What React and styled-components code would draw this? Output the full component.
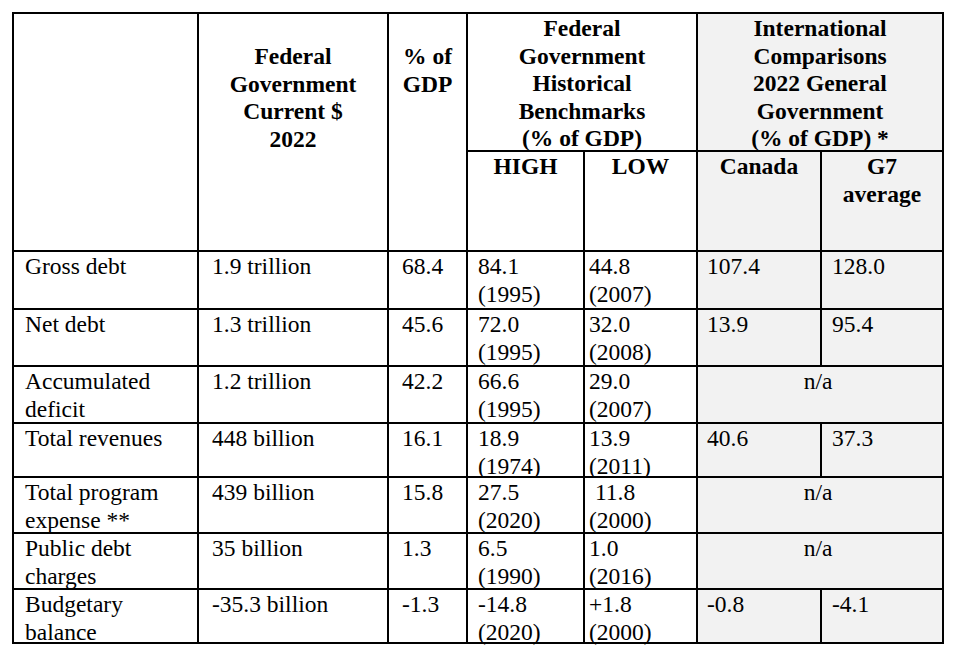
import React from "react";
import styled, { createGlobalStyle } from "styled-components";

const GlobalStyle = createGlobalStyle`
  body {
    margin: 0;
    background: #fff;
  }
`;

const Page = styled.div`
  padding: 12px;
  font-family: "Liberation Serif", "Times New Roman", serif;
  font-size: 23.5px;
  color: #000;
`;

// widths include the 2px right border of each column
const Table = styled.div`
  display: grid;
  grid-template-columns: 185px 190px 79px 117px 113px 124px 122px;
  grid-template-rows: 138px 100px 58px 57px 57px 54px 56px 56px 54px;
  width: 932px;
  box-sizing: border-box;
  border-left: 2px solid #000;
  border-top: 2px solid #000;
`;

const Cell = styled.div`
  box-sizing: border-box;
  border-right: 2px solid #000;
  border-bottom: 2px solid #000;
  background: ${(p) => (p.$shade ? "#f2f2f2" : "#fff")};
  grid-column: ${(p) => p.$col};
  grid-row: ${(p) => p.$row};
  padding: 0 4px 0 ${(p) => p.$pad || 0}px;
  font-family: "Liberation Serif", "Times New Roman", serif;
  line-height: 28px;
  white-space: pre;
  overflow: visible;
`;

const HeadCell = styled(Cell)`
  font-weight: bold;
  text-align: center;
  line-height: 27.5px;
  padding: ${(p) => p.$top || 0}px 0 0 0;
`;

const HeadText = styled.div`
  margin-top: ${(p) => p.$shift || 0}px;
`;

const CenterText = styled.div`
  text-align: center;
`;

const pads = [11, 13, 13, 10, 4, 9, 10];

const rows = [
  ["Gross debt", "1.9 trillion", "68.4", "84.1\n(1995)", "44.8\n(2007)", "107.4", "128.0"],
  ["Net debt", "1.3 trillion", "45.6", "72.0\n(1995)", "32.0\n(2008)", "13.9", "95.4"],
  ["Accumulated\ndeficit", "1.2 trillion", "42.2", "66.6\n(1995)", "29.0\n(2007)"],
  ["Total revenues", "448 billion", "16.1", "18.9\n(1974)", "13.9\n(2011)", "40.6", "37.3"],
  ["Total program\nexpense **", "439 billion", "15.8", "27.5\n(2020)", " 11.8\n(2000)"],
  ["Public debt\ncharges", "35 billion", "1.3", "6.5\n(1990)", "1.0\n(2016)"],
  ["Budgetary\nbalance", "-35.3 billion", "-1.3", "-14.8\n(2020)", "+1.8\n(2000)", "-0.8", "-4.1"],
];

function BodyRow({ cells, index }) {
  const row = index + 3;
  const out = [];
  for (let i = 0; i < 5; i++) {
    out.push(
      <Cell key={i} $col={`${i + 1}`} $row={`${row}`} $pad={pads[i]}>
        {cells[i]}
      </Cell>
    );
  }
  if (cells.length > 5) {
    out.push(
      <Cell key={5} $col="6" $row={`${row}`} $pad={pads[5]} $shade>
        {cells[5]}
      </Cell>
    );
    out.push(
      <Cell key={6} $col="7" $row={`${row}`} $pad={pads[6]} $shade>
        {cells[6]}
      </Cell>
    );
  } else {
    out.push(
      <Cell key={5} $col="6 / span 2" $row={`${row}`} $shade>
        <CenterText>n/a</CenterText>
      </Cell>
    );
  }
  return out;
}

export default function App() {
  return (
    <Page>
      <GlobalStyle />
      <Table>
        <HeadCell $col="1" $row="1 / span 2" />
        <HeadCell $col="2" $row="1 / span 2" $top={29}>
          Federal
          <br />
          Government
          <br />
          Current $
          <br />
          2022
        </HeadCell>
        <HeadCell $col="3" $row="1 / span 2" $top={29}>
          % of
          <br />
          GDP
        </HeadCell>
        <HeadCell $col="4 / span 2" $row="1">
          <HeadText $shift={1}>
            Federal
            <br />
            Government
            <br />
            Historical
            <br />
            Benchmarks
            <br />
            (% of GDP)
          </HeadText>
        </HeadCell>
        <HeadCell $col="6 / span 2" $row="1" $shade>
          <HeadText $shift={1}>
            International
            <br />
            Comparisons
            <br />
            2022 General
            <br />
            Government
            <br />
            (% of GDP) *
          </HeadText>
        </HeadCell>
        <HeadCell $col="4" $row="2">
          <HeadText $shift={1}>HIGH</HeadText>
        </HeadCell>
        <HeadCell $col="5" $row="2">
          <HeadText $shift={1}>LOW</HeadText>
        </HeadCell>
        <HeadCell $col="6" $row="2" $shade>
          <HeadText $shift={1}>Canada</HeadText>
        </HeadCell>
        <HeadCell $col="7" $row="2" $shade>
          <HeadText $shift={1}>
            G7
            <br />
            average
          </HeadText>
        </HeadCell>
        {rows.map((r, i) => (
          <BodyRow key={i} cells={r} index={i} />
        ))}
      </Table>
    </Page>
  );
}
